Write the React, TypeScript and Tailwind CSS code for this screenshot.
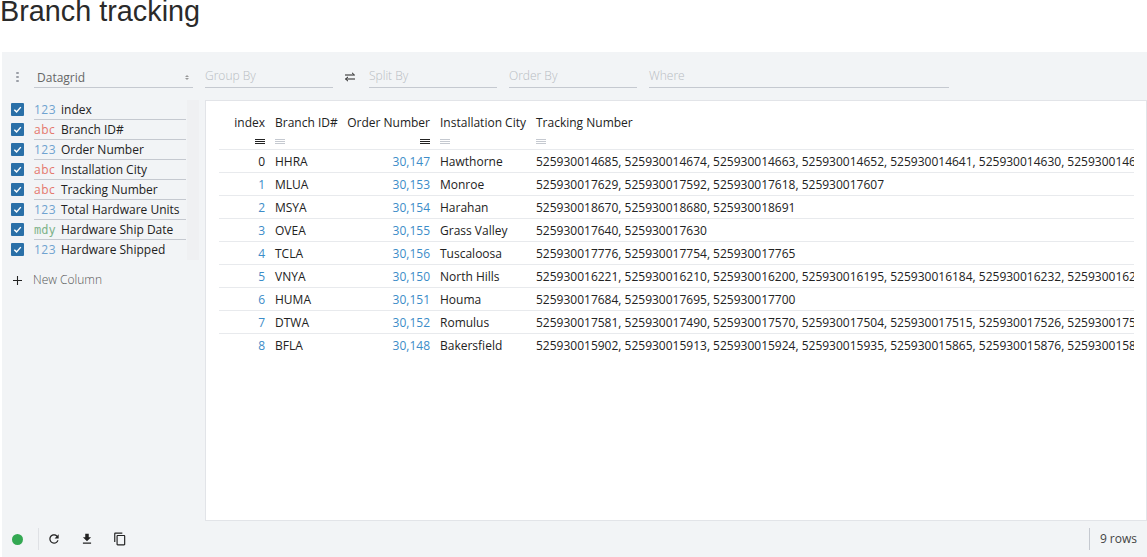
import React from "react";

const FONT = "font-['Open_Sans',sans-serif]";

const columns = [
  { name: "index", type: "123" },
  { name: "Branch ID#", type: "abc" },
  { name: "Order Number", type: "123" },
  { name: "Installation City", type: "abc" },
  { name: "Tracking Number", type: "abc" },
  { name: "Total Hardware Units", type: "123" },
  { name: "Hardware Ship Date", type: "mdy" },
  { name: "Hardware Shipped", type: "123" },
];

const typeStyles: Record<string, string> = {
  "123": "tracking-[0.5px] text-[#6fa3d0]",
  abc: "tracking-[0.5px] text-[#e5786d]",
  mdy: "font-['DejaVu_Sans_Mono',monospace] font-light text-[#7fb38a]",
};

const rows = [
  ["0", "HHRA", "30,147", "Hawthorne", "525930014685, 525930014674, 525930014663, 525930014652, 525930014641, 525930014630, 525930014619, 525930014608"],
  ["1", "MLUA", "30,153", "Monroe", "525930017629, 525930017592, 525930017618, 525930017607"],
  ["2", "MSYA", "30,154", "Harahan", "525930018670, 525930018680, 525930018691"],
  ["3", "OVEA", "30,155", "Grass Valley", "525930017640, 525930017630"],
  ["4", "TCLA", "30,156", "Tuscaloosa", "525930017776, 525930017754, 525930017765"],
  ["5", "VNYA", "30,150", "North Hills", "525930016221, 525930016210, 525930016200, 525930016195, 525930016184, 525930016232, 525930016243, 525930016254"],
  ["6", "HUMA", "30,151", "Houma", "525930017684, 525930017695, 525930017700"],
  ["7", "DTWA", "30,152", "Romulus", "525930017581, 525930017490, 525930017570, 525930017504, 525930017515, 525930017526, 525930017537, 525930017548"],
  ["8", "BFLA", "30,148", "Bakersfield", "525930015902, 525930015913, 525930015924, 525930015935, 525930015865, 525930015876, 525930015887, 525930015898"],
];

const MenuLines = ({ dark }: { dark?: boolean }) => (
  <span className="inline-flex w-[10px] flex-col gap-[1px] align-middle">
    {[0, 1, 2].map((i) => (
      <span key={i} className={`h-px w-full ${dark ? "bg-[#222222]" : "bg-[#c5c9d0]"}`} />
    ))}
  </span>
);

const Check = () => (
  <span className="flex h-[13px] w-[13px] items-center justify-center rounded-[1px] bg-[#2a70a8]">
    <svg viewBox="0 0 12 12" className="h-[11px] w-[11px]" fill="none" stroke="#ffffff" strokeWidth="1.6">
      <path d="M2.5 6.2 5 8.6 9.6 3.4" />
    </svg>
  </span>
);

const Slot = ({ label, className }: { label: string; className: string }) => (
  <div className={`flex h-[23px] items-center border-b border-[#c5c9d0] text-[12px] font-light text-[#b8bcc2] ${className}`}>
    {label}
  </div>
);

const Icon = ({ d }: { d: string }) => (
  <svg viewBox="0 0 24 24" className="h-[14px] w-[14px]" fill="#222222">
    <path d={d} />
  </svg>
);

export default function App() {
  return (
    <div className={`flex h-[557px] w-[1147px] flex-col overflow-hidden bg-white ${FONT}`}>
      <h1 className="h-[52px] font-['Liberation_Sans',sans-serif] text-[28.8px] leading-[22px] text-[#2a2a2a]">
        Branch tracking
      </h1>
      <div className="ml-[2px] flex min-h-0 flex-1 flex-col bg-[#f2f4f6]">
        {/* config row */}
        <div className="flex h-[48px] shrink-0 items-start pt-[13px]">
          <div className="flex w-[31px] justify-center pt-[7px]">
            <span className="flex flex-col gap-[2px]">
              {[0, 1, 2].map((i) => (
                <span key={i} className="h-[2px] w-[3px] rounded-full bg-[#9a9ea6]" />
              ))}
            </span>
          </div>
          <div className="ml-px flex h-[23px] w-[159px] items-center justify-between border-b border-[#c5c9d0] pt-[3px] pr-[4px] pl-[3px] text-[12px] text-[#666666]">
            Datagrid
            <span className="flex flex-col gap-px">
              <span className="h-0 w-0 border-x-[2px] border-b-[2px] border-x-transparent border-b-[#999999]" />
              <span className="h-0 w-0 border-x-[2px] border-t-[2px] border-x-transparent border-t-[#999999]" />
            </span>
          </div>
          <Slot label="Group By" className="ml-[12px] w-[128px]" />
          <div className="flex h-[23px] w-[36px] items-center justify-center pr-[2px]">
            <svg viewBox="0 0 12 12" className="h-[12px] w-[12px]" fill="none" stroke="#222222" strokeWidth="1">
              <path d="M1 4h9.5M8 1.8 10.5 4M11 8H1.5M4 5.9 1.5 8 4 10.2" />
            </svg>
          </div>
          <Slot label="Split By" className="w-[128px]" />
          <Slot label="Order By" className="ml-[12px] w-[128px]" />
          <Slot label="Where" className="ml-[12px] w-[300px]" />
        </div>

        <div className="flex min-h-0 flex-1">
          {/* column list */}
          <div className="w-[203px] shrink-0">
            <div className="w-[197px] bg-[#eff0f2]">
              <div className="w-[185px] bg-[#f2f4f6]">
                {columns.map((c, i) => (
                  <div key={c.name} className="flex h-[20px] items-center">
                    <div className="flex w-[32px] justify-center pr-[2px] pb-[2px]">
                      <Check />
                    </div>
                    <div
                      className={`flex h-[20px] w-[152px] items-center border-b text-[12px] text-[#222222] ${
                        i === columns.length - 1 ? "border-transparent" : "border-[#c5c9d0]"
                      }`}
                    >
                      <span className={`w-[27px] ${typeStyles[c.type]}`}>{c.type}</span>
                      {c.name}
                    </div>
                  </div>
                ))}
              </div>
            </div>
            <div className="mt-[10px] flex h-[20px] items-center text-[12px] font-light text-[#555555]">
              <span className="flex w-[30px] justify-center text-[#222222]">
                <svg viewBox="0 0 10 10" className="h-[9px] w-[9px]" stroke="currentColor" strokeWidth="1.2">
                  <path d="M5 0v10M0 5h10" />
                </svg>
              </span>
              <span className="pl-[1px]">New Column</span>
            </div>
          </div>

          {/* datagrid */}
          <div className="min-w-0 flex-1 border border-[#e2e4e8] bg-white pt-[12px] pr-[12px] pl-[13px]">
            <table className="w-[915px] table-fixed border-collapse text-[12px] text-[#222222]">
              <colgroup>
                <col className="w-[51px]" />
                <col className="w-[73px]" />
                <col className="w-[92px]" />
                <col className="w-[96px]" />
                <col className="w-[603px]" />
              </colgroup>
              <thead>
                <tr className="h-[19px]">
                  <th className="pr-[5px] text-right font-normal">index</th>
                  <th className="pl-[5px] text-left font-normal whitespace-nowrap">Branch ID#</th>
                  <th className="pr-[5px] text-right font-normal whitespace-nowrap">Order Number</th>
                  <th className="pl-[5px] text-left font-normal whitespace-nowrap">Installation City</th>
                  <th className="pl-[5px] text-left font-normal">Tracking Number</th>
                </tr>
                <tr className="h-[17px] border-b border-[#e8eaed] leading-[10px]">
                  <th className="pt-px pr-[5px] text-right"><MenuLines dark /></th>
                  <th className="pt-px pl-[5px] text-left"><MenuLines /></th>
                  <th className="pt-px pr-[5px] text-right"><MenuLines dark /></th>
                  <th className="pt-px pl-[5px] text-left"><MenuLines /></th>
                  <th className="pt-px pl-[5px] text-left"><MenuLines /></th>
                </tr>
              </thead>
              <tbody>
                {rows.map((r, i) => (
                  <tr key={r[0]} className={`h-[23px] ${i < rows.length - 1 ? "border-b border-[#e8eaed]" : ""}`}>
                    <td className={`pt-[2px] pr-[5px] text-right ${r[0] === "0" ? "text-[#222222]" : "text-[#3c8cc8]"}`}>{r[0]}</td>
                    <td className="pt-[2px] pl-[5px]">{r[1]}</td>
                    <td className="pt-[2px] pr-[5px] text-right text-[#3c8cc8]">{r[2]}</td>
                    <td className="pt-[2px] pl-[5px] whitespace-nowrap">{r[3]}</td>
                    <td className="overflow-hidden pt-[2px] pl-[5px] whitespace-nowrap">{r[4]}</td>
                  </tr>
                ))}
              </tbody>
            </table>
          </div>
        </div>

        {/* status bar */}
        <div className="flex h-[36px] shrink-0 items-center">
          <span className="ml-[10px] h-[11px] w-[11px] rounded-full bg-[#33a852]" />
          <span className="ml-[15px] h-[22px] w-px bg-[#dfe1e5]" />
          <div className="ml-[8px] flex items-center gap-[19px]">
            <Icon d="M17.65 6.35C16.2 4.9 14.21 4 12 4c-4.42 0-7.99 3.58-7.99 8s3.57 8 7.99 8c3.73 0 6.84-2.55 7.73-6h-2.08c-.82 2.33-3.04 4-5.65 4-3.31 0-6-2.69-6-6s2.69-6 6-6c1.66 0 3.14.69 4.22 1.78L13 11h7V4l-2.35 2.35z" />
            <Icon d="M19 9h-4V3H9v6H5l7 7 7-7zM5 18v2h14v-2H5z" />
            <Icon d="M16 1H4c-1.1 0-2 .9-2 2v14h2V3h12V1zm3 4H8c-1.1 0-2 .9-2 2v14c0 1.1.9 2 2 2h11c1.1 0 2-.9 2-2V7c0-1.1-.9-2-2-2zm0 16H8V7h11v14z" />
          </div>
          <div className="ml-auto flex h-[22px] items-center border-l border-[#c5c9d0] pr-[10px] pl-[10px] text-[12px] text-[#444444]">
            9 rows
          </div>
        </div>
      </div>
    </div>
  );
}
